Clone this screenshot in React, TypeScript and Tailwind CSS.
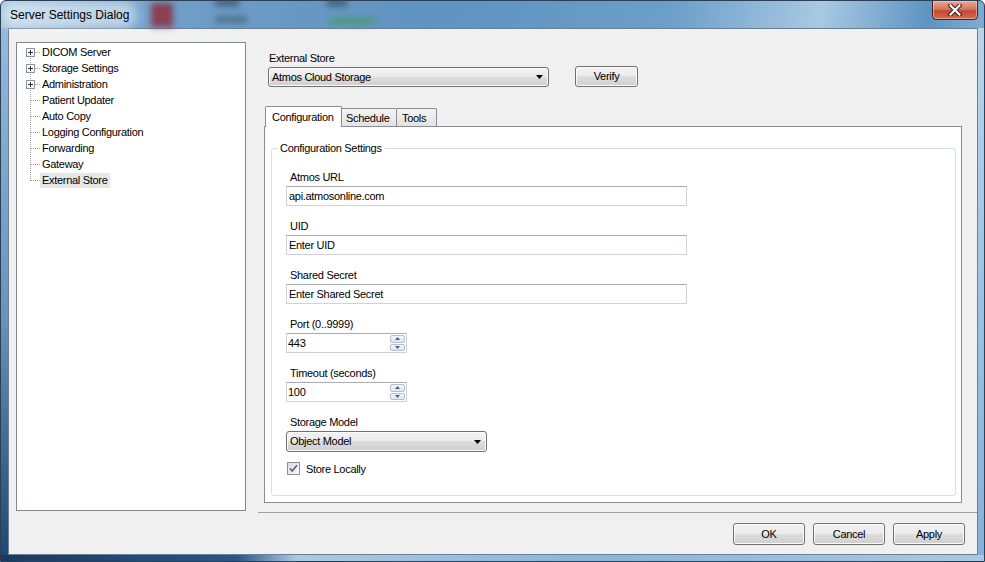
import React from "react";

const FONT = "font-['Liberation_Sans',Arial,sans-serif] text-[11px] tracking-[-0.3px] text-black";

const BUTTON =
  "border border-[#707070] rounded-[3px] bg-[linear-gradient(to_bottom,#f2f2f2_0%,#ebebeb_49%,#dddddd_50%,#cfcfcf_100%)] shadow-[inset_0_0_0_1px_#fcfcfc]";

const treeItems = [
  { label: "DICOM Server", expandable: true },
  { label: "Storage Settings", expandable: true },
  { label: "Administration", expandable: true },
  { label: "Patient Updater" },
  { label: "Auto Copy" },
  { label: "Logging Configuration" },
  { label: "Forwarding" },
  { label: "Gateway" },
  { label: "External Store", selected: true },
];

// dotted tree line + optional plus box, 23x16 per row
function TreeConnector({ plus, first, last }: { plus?: boolean; first?: boolean; last?: boolean }) {
  return (
    <svg width="23" height="16" className="shrink-0" shapeRendering="crispEdges">
      <line x1="13.5" y1={first ? 8 : 0} x2="13.5" y2={last ? 9 : 16} stroke="#a0a0a0" strokeDasharray="1 1" />
      <line x1={plus ? 18 : 14} y1="8.5" x2="23" y2="8.5" stroke="#a0a0a0" strokeDasharray="1 1" />
      {plus && (
        <>
          <rect x="9.5" y="4.5" width="8" height="8" fill="#fff" stroke="#919191" />
          <line x1="11" y1="8.5" x2="16" y2="8.5" stroke="#1d2f61" />
          <line x1="13.5" y1="6" x2="13.5" y2="11" stroke="#1d2f61" />
        </>
      )}
    </svg>
  );
}

function DropArrow() {
  return (
    <svg width="7" height="4" viewBox="0 0 7 4">
      <path d="M0 0h7L3.5 4z" fill="#000" />
    </svg>
  );
}

function Combo({ value, width, height }: { value: string; width: string; height: string }) {
  return (
    <div className={`${BUTTON} ${width} ${height} flex items-center justify-between pl-[3px] pr-[5px]`}>
      <span>{value}</span>
      <DropArrow />
    </div>
  );
}

function TextBox({ value }: { value: string }) {
  return (
    <div className="w-[401px] h-[20px] border border-[#cfd3d9] border-t-[#abadb3] bg-white flex items-center pl-[2px]">
      {value}
    </div>
  );
}

function SpinBox({ value }: { value: string }) {
  const arrow = (up: boolean) => (
    <div className="flex-1 border border-[#b4bfd0] rounded-[2px] bg-[linear-gradient(to_bottom,#f4f6f9,#dfe4ec)] flex items-center justify-center">
      <svg width="5" height="3" viewBox="0 0 5 3">
        <path d={up ? "M0 3h5L2.5 0z" : "M0 0h5L2.5 3z"} fill="#4d5f86" />
      </svg>
    </div>
  );
  return (
    <div className="w-[121px] h-[20px] border border-[#cfd3d9] border-t-[#abadb3] bg-white flex items-stretch">
      <div className="flex-1 flex items-center pl-[1px]">{value}</div>
      <div className="w-[15px] flex flex-col gap-[1px] my-[1px] mr-[1px]">
        {arrow(true)}
        {arrow(false)}
      </div>
    </div>
  );
}

function Field({ label, children, last }: { label: string; children: React.ReactNode; last?: boolean }) {
  return (
    <div className={last ? "" : "mb-[13px]"}>
      <div className="h-[16px] leading-[14px] pl-[4px]">{label}</div>
      {children}
    </div>
  );
}

export default function App() {
  return (
    <div className={`${FONT} w-[985px] h-[562px] flex flex-col border border-[#2d3f55] rounded-t-[6px] overflow-hidden bg-[linear-gradient(100deg,#a9c9e1_0%,#6f9ec8_16%,#5f93c0_40%,#6b9ec9_62%,#a8c9e2_76%,#5d94c2_86%,#b8d4ea_100%)]`}>
      {/* title bar */}
      <div className="relative h-[27px] flex items-start justify-between">
        <div className="absolute left-[150px] top-[2px] w-[22px] h-[24px] bg-[#8e2f3c] blur-[3px] opacity-85" />
        <div className="absolute left-[214px] -top-[2px] w-[24px] h-[7px] bg-[#25323f] blur-[3px] opacity-60" />
        <div className="absolute left-[214px] top-[15px] w-[32px] h-[7px] bg-[#34485b] blur-[3px] opacity-50" />
        <div className="absolute left-[326px] -top-[2px] w-[20px] h-[7px] bg-[#25323f] blur-[3px] opacity-60" />
        <div className="absolute left-[328px] top-[16px] w-[46px] h-[8px] bg-[#3f9a55] blur-[3px] opacity-55" />
        <span className="relative ml-[7px] mt-[6px] px-[2px] leading-[16px] text-[12px] tracking-normal rounded-full bg-white/45 shadow-[0_0_10px_6px_rgba(255,255,255,0.45)]">
          Server Settings Dialog
        </span>
        <div className="relative -mt-px mr-[6px] w-[46px] h-[20px] rounded-b-[4px] border border-[#47201b] bg-[linear-gradient(to_bottom,#e8a693_0%,#d7775f_45%,#c24a32_55%,#d56a50_100%)] shadow-[inset_0_0_0_1px_rgba(255,220,210,0.5)] flex items-center justify-center">
          <svg width="14" height="12" viewBox="0 0 14 12">
            <path d="M2.5 1.5l9 9M11.5 1.5l-9 9" stroke="#3a1a16" strokeWidth="4.2" strokeLinecap="square" />
            <path d="M2.5 1.5l9 9M11.5 1.5l-9 9" stroke="#fff" strokeWidth="2.2" strokeLinecap="square" />
          </svg>
        </div>
      </div>

      <div className="flex h-[527px]">
        <div className="w-[7px] bg-[linear-gradient(to_bottom,#94badb_0%,#6793bd_55%,#1f4774_100%)]" />
        {/* client area */}
        <div className="w-[970px] h-[527px] border border-[#6b7f95] bg-[#f0f0f0] flex flex-col">
          <div className="flex h-[484px]">
            {/* tree */}
            <div className="ml-[7px] mt-[13px] w-[230px] h-[469px] border border-[#828790] bg-white pt-px">
              {treeItems.map((item, i) => (
                <div key={item.label} className="h-[16px] flex items-center">
                  <TreeConnector plus={item.expandable} first={i === 0} last={i === treeItems.length - 1} />
                  <span className={`px-[2px] h-[15px] leading-[15px] mt-px ${item.selected ? "bg-[#e6e6e6]" : ""}`}>
                    {item.label}
                  </span>
                </div>
              ))}
            </div>

            {/* right side */}
            <div className="ml-[12px] flex-1 border-b border-[#a0a0a0] pt-[22px]">
              <div className="pl-[11px] h-[13px] leading-[14px]">External Store</div>
              <div className="flex items-start mt-[2px] ml-[10px]">
                <div className="mt-px">
                  <Combo value="Atmos Cloud Storage" width="w-[281px]" height="h-[20px]" />
                </div>
                <div className={`${BUTTON} ml-[26px] w-[63px] h-[21px] flex items-center justify-center`}>Verify</div>
              </div>

              {/* tabs */}
              <div className="ml-[6px] mt-[19px]">
                <div className="flex items-end h-[20px]">
                  <div className="relative z-10 -mb-px ml-px h-[21px] w-[77px] bg-white border border-b-0 border-[#898c95] rounded-t-[2px] flex items-center pl-[6px]">
                    Configuration
                  </div>
                  <div className="h-[18px] w-[55px] border border-b-0 border-l-0 border-[#898c95] rounded-tr-[2px] bg-[linear-gradient(to_bottom,#f3f3f3,#e3e3e3)] flex items-center pl-[4px] pt-[2px]">
                    Schedule
                  </div>
                  <div className="h-[18px] w-[40px] border border-b-0 border-l-0 border-[#898c95] rounded-tr-[2px] bg-[linear-gradient(to_bottom,#f3f3f3,#e3e3e3)] flex items-center pl-[5px] pt-[2px]">
                    Tools
                  </div>
                </div>
                <div className="w-[698px] h-[377px] border border-[#898c95] bg-white pl-[6px] pt-[21px]">
                  <div className="relative w-[685px] h-[348px] border border-[#d5dfe5] rounded-[3px] pl-[14px] pt-[21px]">
                    <span className="absolute left-[6px] -top-[7px] px-[2px] bg-white leading-[13px]">
                      Configuration Settings
                    </span>
                    <Field label="Atmos URL">
                      <TextBox value="api.atmosonline.com" />
                    </Field>
                    <Field label="UID">
                      <TextBox value="Enter UID" />
                    </Field>
                    <Field label="Shared Secret">
                      <TextBox value="Enter Shared Secret" />
                    </Field>
                    <Field label="Port (0..9999)">
                      <SpinBox value="443" />
                    </Field>
                    <Field label="Timeout (seconds)">
                      <SpinBox value="100" />
                    </Field>
                    <Field label="Storage Model" last>
                      <Combo value="Object Model" width="w-[201px]" height="h-[21px]" />
                    </Field>
                    <div className="mt-[10px] ml-px flex items-center h-[13px]">
                      <div className="w-[13px] h-[13px] border border-[#8f8f8f] bg-[linear-gradient(135deg,#dcdcdc,#fafafa)] flex items-center justify-center">
                        <svg width="9" height="9" viewBox="0 0 9 9">
                          <path d="M1 4.5l2.2 2.5L8 1.2" fill="none" stroke="#4a5f97" strokeWidth="1.6" />
                        </svg>
                      </div>
                      <span className="ml-[6px] mt-px">Store Locally</span>
                    </div>
                  </div>
                </div>
              </div>
            </div>
          </div>

          {/* footer buttons */}
          <div className="flex justify-end gap-[8px] mt-[10px] mr-[12px]">
            <div className={`${BUTTON} border-[#3c7fb1] shadow-[inset_0_0_0_1px_#c6e6f8] w-[72px] h-[22px] flex items-center justify-center`}>OK</div>
            <div className={`${BUTTON} w-[72px] h-[22px] flex items-center justify-center`}>Cancel</div>
            <div className={`${BUTTON} w-[72px] h-[22px] flex items-center justify-center`}>Apply</div>
          </div>
        </div>
        <div className="w-[6px] bg-[linear-gradient(to_bottom,#b9d5eb_0%,#9cc3e2_50%,#86b1d8_100%)]" />
      </div>
      <div className="h-[6px] bg-[linear-gradient(to_right,#1a3a60_0%,#2b5585_24%,#a9cae4_30%,#8cb5d9_60%,#a7c9e3_100%)]" />
    </div>
  );
}
